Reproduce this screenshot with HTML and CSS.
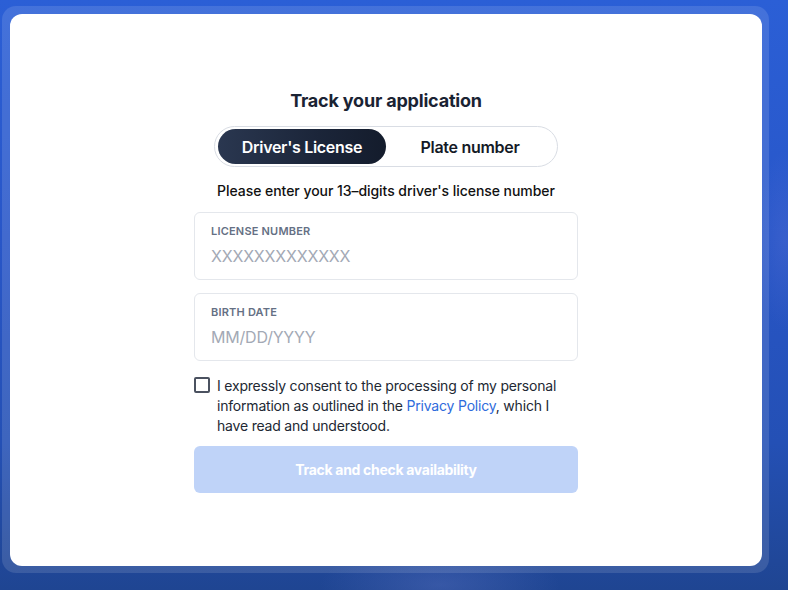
FILE: index.html
```html
<!DOCTYPE html>
<html lang="en">
<head>
<meta charset="utf-8">
<title>Track your application</title>
<link rel="stylesheet" href="styles.css">
</head>
<body>
<div class="frame">
  <main class="card">
    <div class="form">
      <h1 class="title">Track your application</h1>
      <div class="toggle">
        <button class="tab tab-active">Driver's License</button>
        <button class="tab">Plate number</button>
      </div>
      <p class="hint">Please enter your 13–digits driver's license number</p>
      <label class="field">
        <span class="field-label">LICENSE NUMBER</span>
        <span class="field-input">XXXXXXXXXXXXX</span>
      </label>
      <label class="field">
        <span class="field-label">BIRTH DATE</span>
        <span class="field-input">MM/DD/YYYY</span>
      </label>
      <div class="consent">
        <span class="checkbox"></span>
        <p class="consent-text">I expressly consent to the processing of my personal information as outlined in the <a class="link" href="#">Privacy Policy</a>, which I have read and understood.</p>
      </div>
      <button class="submit">Track and check availability</button>
    </div>
  </main>
</div>
</body>
</html>
```
FILE: styles.css
```css
* { box-sizing: border-box; }
html, body { margin: 0; height: 100%; }
body {
  padding: 6px 0 0 2px;
  font-family: Inter, "Noto Sans", sans-serif;
  background:
    radial-gradient(ellipse 120px 40px at 440px 585px, rgba(110,130,210,0.3), transparent),
    radial-gradient(ellipse 30px 90px at 785px 240px, rgba(120,130,220,0.2), transparent),
    linear-gradient(180deg, #2b5fd6 0%, #2856c8 40%, #2450b5 75%, #1f4592 100%);
  overflow: hidden;
}
.frame {
  width: 767px;
  height: 567px;
  padding: 8px;
  border-radius: 14px;
  background: rgba(255,255,255,0.12);
}
.card {
  width: 752px;
  height: 552px;
  background: #fff;
  border-radius: 12px;
  display: flex;
  justify-content: center;
  padding-top: 76px;
}
.form {
  width: 384px;
  display: flex;
  flex-direction: column;
  align-items: center;
}
.title {
  margin: 0;
  font-size: 18px;
  font-weight: 700;
  color: #1a2333;
  line-height: 22px;
  letter-spacing: -0.2px;
}
.toggle {
  margin-top: 14px;
  width: 344px;
  height: 41px;
  border: 1px solid #d9dde4;
  border-radius: 21px;
  padding: 2px 3px;
  display: flex;
  align-items: center;
}
.tab {
  border: 0;
  background: transparent;
  font-family: inherit;
  font-size: 16px;
  font-weight: 600;
  color: #141a26;
  height: 35px;
  border-radius: 18px;
  flex: 1;
  letter-spacing: -0.3px;
  padding: 0;
}
.tab-active {
  flex: 0 0 168px;
  color: #fff;
  background: linear-gradient(90deg, #2a3750 0%, #1b2539 60%, #141c2c 100%);
}
.hint {
  margin: 14px 0 0;
  font-size: 14px;
  font-weight: 500;
  color: #111;
  line-height: 20px;
  letter-spacing: -0.05px;
}
.field {
  margin-top: 11px;
  width: 384px;
  height: 68px;
  border: 1px solid #e4e7ec;
  border-radius: 6px;
  padding: 11px 16px 0;
  display: flex;
  flex-direction: column;
}
.field + .field { margin-top: 13px; }
.field-label {
  font-size: 11px;
  font-weight: 600;
  color: #657084;
  letter-spacing: 0.2px;
  line-height: 14px;
}
.field-input {
  margin-top: 8px;
  font-size: 16px;
  color: #a3a9b5;
  line-height: 20px;
  letter-spacing: -0.2px;
}
.consent {
  margin-top: 15px;
  width: 384px;
  display: flex;
  gap: 7px;
  align-items: flex-start;
}
.checkbox {
  flex: 0 0 16px;
  width: 16px;
  height: 16px;
  margin-top: 1px;
  border: 2px solid #4b5260;
  border-radius: 2px;
}
.consent-text {
  margin: 0;
  font-size: 14px;
  line-height: 20px;
  color: #222833;
  letter-spacing: -0.2px;
}
.link { color: #2e6bdc; text-decoration: none; }
.submit {
  margin-top: 10px;
  width: 384px;
  height: 47px;
  border: 0;
  border-radius: 6px;
  background: #bfd3f8;
  color: #fff;
  font-family: inherit;
  font-size: 14px;
  font-weight: 700;
  letter-spacing: -0.3px;
}
```
